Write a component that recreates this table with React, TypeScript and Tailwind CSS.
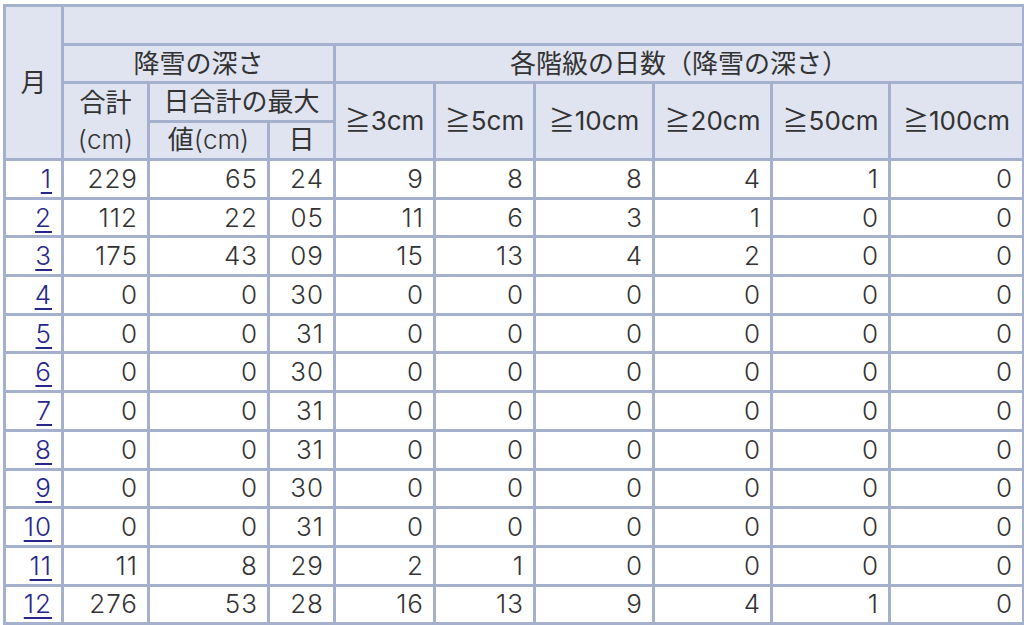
import React from 'react';

const months = [
  { m: '1', v: ['229', '65', '24', '9', '8', '8', '4', '1', '0'] },
  { m: '2', v: ['112', '22', '05', '11', '6', '3', '1', '0', '0'] },
  { m: '3', v: ['175', '43', '09', '15', '13', '4', '2', '0', '0'] },
  { m: '4', v: ['0', '0', '30', '0', '0', '0', '0', '0', '0'] },
  { m: '5', v: ['0', '0', '31', '0', '0', '0', '0', '0', '0'] },
  { m: '6', v: ['0', '0', '30', '0', '0', '0', '0', '0', '0'] },
  { m: '7', v: ['0', '0', '31', '0', '0', '0', '0', '0', '0'] },
  { m: '8', v: ['0', '0', '31', '0', '0', '0', '0', '0', '0'] },
  { m: '9', v: ['0', '0', '30', '0', '0', '0', '0', '0', '0'] },
  { m: '10', v: ['0', '0', '31', '0', '0', '0', '0', '0', '0'] },
  { m: '11', v: ['11', '8', '29', '2', '1', '0', '0', '0', '0'] },
  { m: '12', v: ['276', '53', '28', '16', '13', '9', '4', '1', '0'] },
];

const classes = ['≧3cm', '≧5cm', '≧10cm', '≧20cm', '≧50cm', '≧100cm'];

const th = 'border-[3px] border-[#a5b0cd] bg-[#dfe4f0] font-normal text-center p-0';
const td = 'border-[3px] border-[#a5b0cd] bg-white text-right pr-[9px] py-0 font-light tracking-[1px]';

export default function App() {
  return (
    <div className="bg-white min-h-screen pt-[4px] pl-[3px] overflow-hidden">
      <table
        className="table-fixed border-collapse w-[1019px] text-[26px] leading-[30px] text-[#333]"
        style={{ fontFamily: 'Inter, "Noto Sans CJK JP", "Noto Sans", sans-serif' }}
      >
        <colgroup>
          <col className="w-[58px]" />
          <col className="w-[86px]" />
          <col className="w-[120px]" />
          <col className="w-[66px]" />
          <col className="w-[100px]" />
          <col className="w-[100px]" />
          <col className="w-[119px]" />
          <col className="w-[118px]" />
          <col className="w-[118px]" />
          <col className="w-[134px]" />
        </colgroup>
        <thead>
          <tr className="h-[39px]">
            <th rowSpan={4} className={th}>月</th>
            <th colSpan={9} className={th}></th>
          </tr>
          <tr className="h-[38px]">
            <th colSpan={3} className={th}>降雪の深さ</th>
            <th colSpan={6} className={th}>各階級の日数（降雪の深さ）</th>
          </tr>
          <tr className="h-[38px]">
            <th rowSpan={2} className={`${th} leading-[37px]`}>
              合計
              <br />
              <span className="font-light">(cm)</span>
            </th>
            <th colSpan={2} className={th}>日合計の最大</th>
            {classes.map((c) => (
              <th key={c} rowSpan={2} className={`${th} font-light`}>
                {c}
              </th>
            ))}
          </tr>
          <tr className="h-[38px]">
            <th className={th}>
              値<span className="font-light">(cm)</span>
            </th>
            <th className={th}>日</th>
          </tr>
        </thead>
        <tbody>
          {months.map((row) => (
            <tr key={row.m} className="h-[38.7px]">
              <td className={td}>
                <a
                  href="#"
                  className="text-[#27278a] underline decoration-[2px] underline-offset-[4px]"
                >
                  {row.m}
                </a>
              </td>
              {row.v.map((val, i) => (
                <td key={i} className={td}>
                  {val}
                </td>
              ))}
            </tr>
          ))}
        </tbody>
      </table>
    </div>
  );
}
